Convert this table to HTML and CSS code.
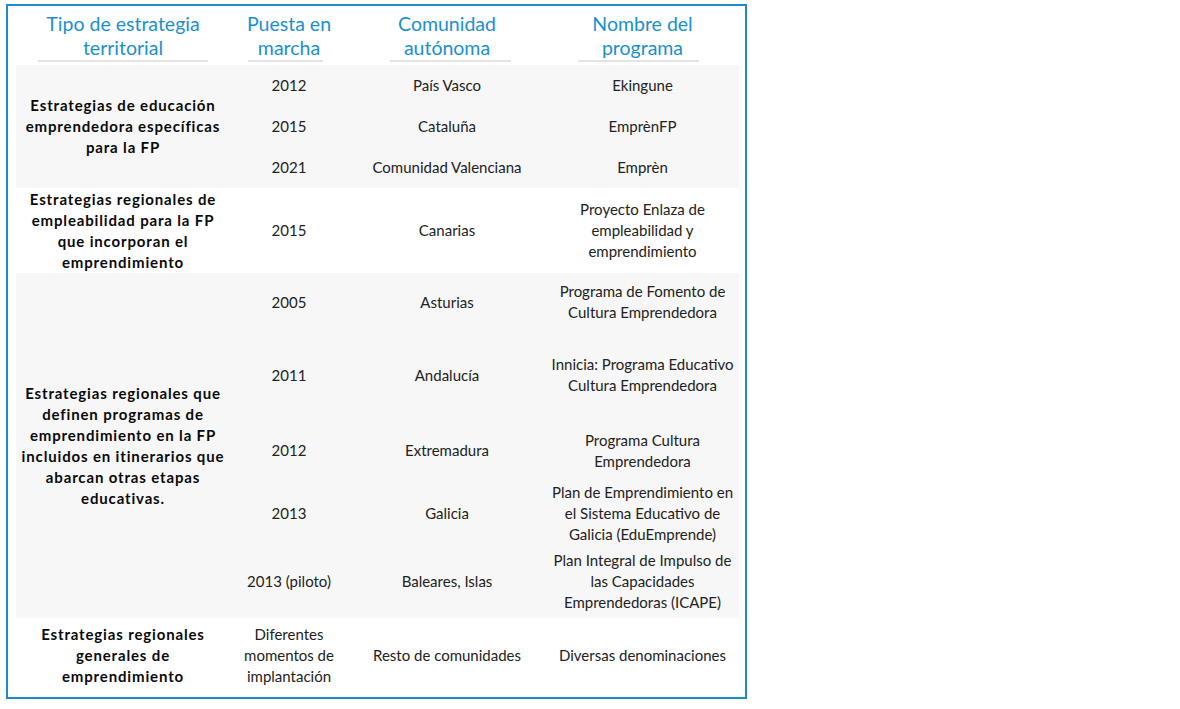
FILE: index.html
```html
<!DOCTYPE html>
<html lang="es">
<head>
<meta charset="utf-8">
<title>Estrategias territoriales</title>
<link rel="stylesheet" href="styles.css">
</head>
<body>
<div class="frame">
<table class="grid">
<colgroup>
<col class="c1"><col class="c2"><col class="c3"><col class="c4">
</colgroup>
<thead>
<tr>
<th><div class="htxt">Tipo de estrategia<br>territorial</div><div class="rule r1"></div></th>
<th><div class="htxt">Puesta en<br>marcha</div><div class="rule r2"></div></th>
<th><div class="htxt">Comunidad<br>autónoma</div><div class="rule r3"></div></th>
<th><div class="htxt">Nombre del<br>programa</div><div class="rule r4"></div></th>
</tr>
</thead>
<tbody>
<tr class="shade h41">
<td rowspan="3" class="strat">Estrategias de educación<br>emprendedora específicas<br>para la FP</td>
<td>2012</td><td>País Vasco</td><td>Ekingune</td>
</tr>
<tr class="shade h41"><td>2015</td><td>Cataluña</td><td>EmprènFP</td></tr>
<tr class="shade h41"><td>2021</td><td>Comunidad Valenciana</td><td>Emprèn</td></tr>

<tr class="h85">
<td class="strat">Estrategias regionales de<br>empleabilidad para la FP<br>que incorporan el<br>emprendimiento</td>
<td>2015</td><td>Canarias</td><td>Proyecto Enlaza de<br>empleabilidad y<br>emprendimiento</td>
</tr>

<tr class="shade h58">
<td rowspan="5" class="strat">Estrategias regionales que<br>definen programas de<br>emprendimiento en la FP<br>incluidos en itinerarios que<br>abarcan otras etapas<br>educativas.</td>
<td>2005</td><td>Asturias</td><td>Programa de Fomento de<br>Cultura Emprendedora</td>
</tr>
<tr class="shade h88"><td>2011</td><td>Andalucía</td><td>Innicia: Programa Educativo<br>Cultura Emprendedora</td></tr>
<tr class="shade h63"><td>2012</td><td>Extremadura</td><td>Programa Cultura<br>Emprendedora</td></tr>
<tr class="shade h62"><td>2013</td><td>Galicia</td><td>Plan de Emprendimiento en<br>el Sistema Educativo de<br>Galicia (EduEmprende)</td></tr>
<tr class="shade h73"><td>2013 (piloto)</td><td>Baleares, Islas</td><td>Plan Integral de Impulso de<br>las Capacidades<br>Emprendedoras (ICAPE)</td></tr>

<tr class="h74">
<td class="strat">Estrategias regionales<br>generales de<br>emprendimiento</td>
<td>Diferentes<br>momentos de<br>implantación</td><td>Resto de comunidades</td><td>Diversas denominaciones</td>
</tr>
</tbody>
</table>
</div>
</body>
</html>
```

FILE: styles.css
```css
html, body {
  margin: 0;
  padding: 0;
  background: #ffffff;
}

body {
  font-family: Lato, "Open Sans", "Liberation Sans", sans-serif;
  color: #222222;
}

.frame {
  margin: 4px 0 0 6px;
  width: 723px;
  height: 691px;
  border: 2px solid #1d8acb;
  padding: 0 6px 0 8px;
}

.grid {
  border-collapse: collapse;
  border-spacing: 0;
  table-layout: fixed;
  width: 723px;
}

.c1 { width: 214px; }
.c2 { width: 118px; }
.c3 { width: 198px; }
.c4 { width: 193px; }

.grid th {
  padding: 6px 0 3px 0;
  height: 50px;
  vertical-align: top;
  font-weight: normal;
  color: #1b8fd2;
  font-size: 19.5px;
  line-height: 24px;
  text-align: center;
  white-space: nowrap;
}

.rule {
  height: 2px;
  background: #e4e4e4;
}
.r1 { margin-left: 22px; width: 170px; }
.r2 { margin-left: 18px; width: 75px; }
.r3 { margin-left: 42px; width: 121px; }
.r4 { margin-left: 32px; width: 121px; }

.grid td {
  padding: 0;
  text-align: center;
  vertical-align: middle;
  white-space: nowrap;
  font-size: 15px;
  line-height: 21px;
}

.grid td.strat {
  font-weight: bold;
  color: #0a0a0a;
  letter-spacing: 0.85px;
}

.shade td { background: #f7f7f7; }

.h41 td { height: 41px; }
.h85 td { height: 85px; }
.h58 td { height: 58px; }
.h88 td { height: 88px; }
.h63 td { height: 63px; }
.h62 td { height: 62px; }
.h73 td { height: 73px; }
.h74 td { height: 74px; }

.grid td.strat { height: auto; }
```
